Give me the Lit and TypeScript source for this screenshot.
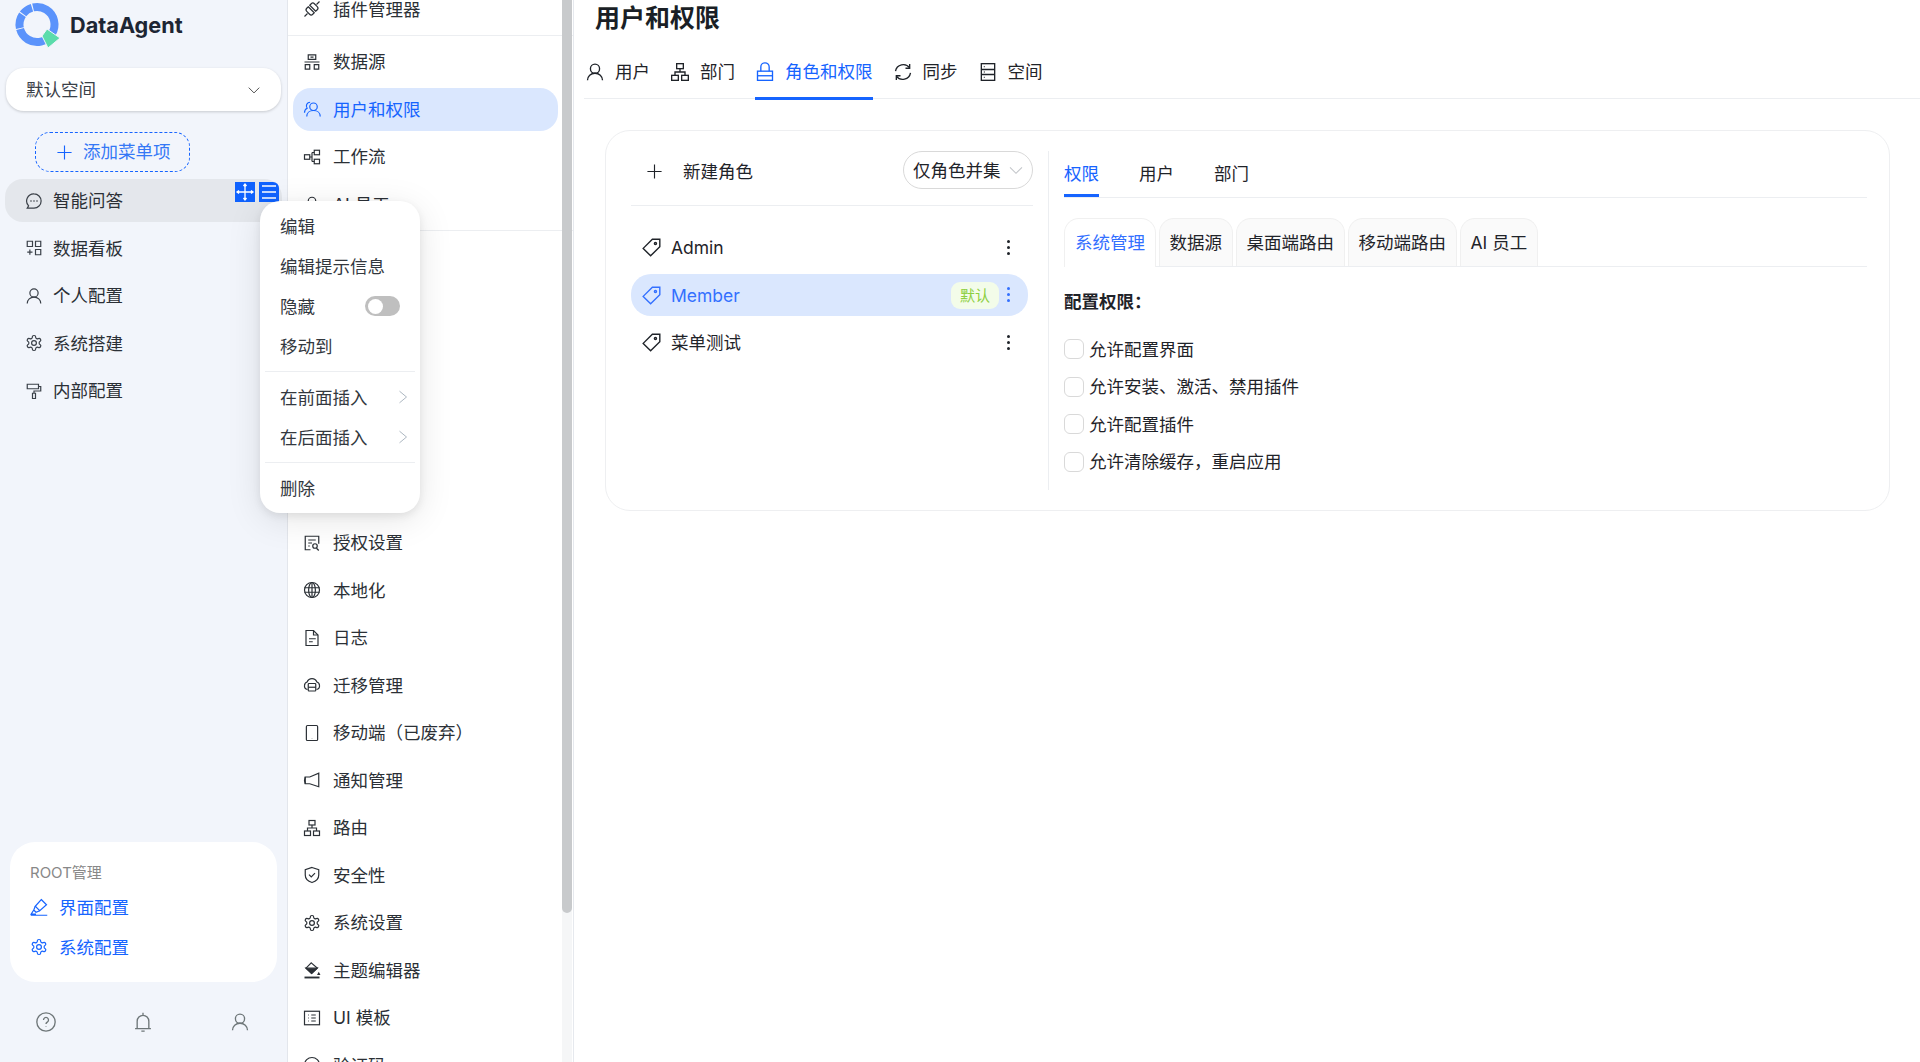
import { LitElement, html, css, svg } from "lit";
import { customElement } from "lit/decorators.js";

// stroke icons on a 24 grid
const gearPath = svg`<path d="M12.22 2h-.44a2 2 0 0 0-2 2v.18a2 2 0 0 1-1 1.73l-.43.25a2 2 0 0 1-2 0l-.15-.08a2 2 0 0 0-2.73.73l-.22.38a2 2 0 0 0 .73 2.73l.15.1a2 2 0 0 1 1 1.72v.51a2 2 0 0 1-1 1.74l-.15.09a2 2 0 0 0-.73 2.73l.22.38a2 2 0 0 0 2.73.73l.15-.08a2 2 0 0 1 2 0l.43.25a2 2 0 0 1 1 1.73V20a2 2 0 0 0 2 2h.44a2 2 0 0 0 2-2v-.18a2 2 0 0 1 1-1.73l.43-.25a2 2 0 0 1 2 0l.15.08a2 2 0 0 0 2.73-.73l.22-.39a2 2 0 0 0-.73-2.73l-.15-.08a2 2 0 0 1-1-1.74v-.5a2 2 0 0 1 1-1.74l.15-.09a2 2 0 0 0 .73-2.73l-.22-.38a2 2 0 0 0-2.73-.73l-.15.08a2 2 0 0 1-2 0l-.43-.25a2 2 0 0 1-1-1.73V4a2 2 0 0 0-2-2z"/><circle cx="12" cy="12" r="3.2"/>`;

const icons: Record<string, unknown> = {
  plug: svg`<path d="M22 2l-4 4M2 22l4-4"/><path d="M7 9l8 8-2 2a3 3 0 0 1-4.2 0l-3.800-3.800a3 3 0 0 1 0-4.200z"/><path d="M17 15l-8-8 2-2a3 3 0 0 1 4.200 0l3.800 3.800a3 3 0 0 1 0 4.200z"/>`,
  datasource: svg`<path d="M7 2.500h10v6H7zM3 15.500h6v6H3zM15 15.500h6v6h-6z"/><path d="M2 12h20M10 5.500h4" />`,
  team: svg`<circle cx="14" cy="9" r="5"/><path d="M5 22c0-5 4-8 9-8s9 3 9 8"/><path d="M9.500 3a5 5 0 0 0-4 8c-2 1-3.500 3-3.500 6"/>`,
  flow: svg`<rect x="2" y="9" width="7" height="6"/><rect x="15" y="3" width="7" height="6"/><rect x="15" y="15" width="7" height="6"/><path d="M9 12h3M12 6v12M12 6h3M12 18h3"/>`,
  robot: svg`<circle cx="12" cy="8" r="5"/><path d="M4 21c0-4 4-7 8-7s8 3 8 7"/>`,
  license: svg`<path d="M10 21H3V3h18v10"/><path d="M7 8h10M7 12h5M7 16h2"/><circle cx="16" cy="16" r="3"/><path d="M18 19l3 3"/>`,
  globe: svg`<circle cx="12" cy="12" r="10"/><ellipse cx="12" cy="12" rx="4.500" ry="10"/><path d="M2 9h20M2 15h20M12 2v20"/>`,
  file: svg`<path d="M14 2H4v20h16V8z"/><path d="M14 2v6h6M8 13h9M8 17h5"/>`,
  cloud: svg`<path d="M6 18a5 5 0 0 1-4-5.500 5 5 0 0 1 3.500-4.500 7 7 0 0 1 13 0 5 5 0 0 1 3.500 4.500 5 5 0 0 1-4 5.500"/><rect x="7" y="10" width="10" height="10" rx="1"/><path d="M7 15h10"/>`,
  mobile: svg`<rect x="4.500" y="2" width="15" height="20" rx="1.500"/><path d="M12 18.500v.5"/>`,
  horn: svg`<path d="M21 3v18L9 17H3V8h6z"/><path d="M3 8l-1 4.500L3 17"/>`,
  tree: svg`<rect x="8" y="2" width="8" height="6"/><rect x="2" y="16" width="8" height="6"/><rect x="14" y="16" width="8" height="6"/><path d="M12 8v4M6 16v-4h12v4"/>`,
  shield: svg`<path d="M12 2l9 3v7c0 5-4 8.500-9 10-5-1.500-9-5-9-10V5z"/><path d="M8 11.500l3 3 5-5"/>`,
  gear: gearPath,
  bucket: svg`<path d="M11 2.500l8 7-7.500 7-7.500-7z"/><path d="M4 9.500h15l-7.500 7z" fill="currentColor"/><path d="M2 22h20" stroke-width="2.500"/><path d="M21 16l1 2h-2z" fill="currentColor"/>`,
  list: svg`<rect x="2" y="3" width="20" height="18"/><path d="M7 8h1M7 12h1M7 16h1M11 8h6M11 12h6M11 16h6"/>`,
  captcha: svg`<circle cx="12" cy="12" r="10"/>`,
  chat: svg`<path d="M12 2.500a9.500 9.500 0 0 1 0 19H3l1.800-3A9.500 9.500 0 0 1 12 2.500z"/><g fill="currentColor" stroke="none"><circle cx="8" cy="12" r="1.100"/><circle cx="12" cy="12" r="1.100"/><circle cx="16" cy="12" r="1.100"/></g>`,
  board: svg`<path d="M3 3h7v7H3zM14 3h7v7h-7zM14 14h7v7h-7zM6.500 14v7M3 17.500h7"/>`,
  user: svg`<circle cx="12" cy="8" r="5.500"/><path d="M3 22c0-5 4-8.500 9-8.500s9 3.500 9 8.500"/>`,
  roller: svg`<path d="M3 3h15v6H3zM18 6h3v6h-9v3M10 15h4v7h-4z"/>`,
  lock: svg`<rect x="3" y="11" width="18" height="11"/><path d="M7 11V6a5 5 0 0 1 10 0v5"/><path d="M3 16.500h18"/>`,
  sync: svg`<path d="M20 7a9.500 9.500 0 0 0-17 4"/><path d="M4 17a9.500 9.500 0 0 0 17-4"/><path d="M20 2.500V7.500h-5M4 21.500V16.500h5"/>`,
  space: svg`<rect x="4" y="2" width="16" height="20"/><path d="M4 9h16M4 15h16M7 5.500h1M7 12h1M7 18.500h1"/>`,
  tag: svg`<path d="M13 2.500h8.500V11L11 21.500 2.500 13z"/><circle cx="16.500" cy="7.500" r="1.200"/>`,
  help: svg`<circle cx="12" cy="12" r="11"/><path d="M9 9.500a3 3 0 1 1 4.500 2.600c-1 .6-1.500 1.200-1.500 2.400M12 17.500v.5"/>`,
  bell: svg`<path d="M12 1v2.500M5 20V11a7 7 0 0 1 14 0v9M2.500 20h19M10 23h4"/>`,
  highlight: svg`<path d="M15 2l7 7-9 8-6-6z"/><path d="M7 11l-2 5 3 3 5-2M1 23h22M5 16l-3.500 5.500H8"/>`,
  plus: svg`<path d="M12 2v20M2 12h20"/>`,
  chevron: svg`<path d="M3 8l9 9 9-9"/>`,
  right: svg`<path d="M6 2l12 10L6 22"/>`,
};

const icon = (name: string, size = 20) =>
  html`<svg class="ic" width=${size} height=${size} viewBox="0 0 24 24" fill="none" stroke="currentColor" stroke-width="1.600">${icons[name]}</svg>`;

const topPanel = [
  { i: "plug", t: "插件管理器" },
  { i: "datasource", t: "数据源", sep: true },
  { i: "team", t: "用户和权限", on: true },
  { i: "flow", t: "工作流" },
  { i: "robot", t: "AI 员工" },
];

const bottomPanel = [
  { i: "license", t: "授权设置" },
  { i: "globe", t: "本地化" },
  { i: "file", t: "日志" },
  { i: "cloud", t: "迁移管理" },
  { i: "mobile", t: "移动端（已废弃）" },
  { i: "horn", t: "通知管理" },
  { i: "tree", t: "路由" },
  { i: "shield", t: "安全性" },
  { i: "gear", t: "系统设置" },
  { i: "bucket", t: "主题编辑器" },
  { i: "list", t: "UI 模板" },
  { i: "captcha", t: "验证码" },
];

const sideNav = [
  { i: "chat", t: "智能问答", on: true },
  { i: "board", t: "数据看板" },
  { i: "user", t: "个人配置" },
  { i: "gear", t: "系统搭建" },
  { i: "roller", t: "内部配置" },
];

const pageTabs = [
  { i: "user", t: "用户" },
  { i: "tree", t: "部门" },
  { i: "lock", t: "角色和权限", on: true },
  { i: "sync", t: "同步" },
  { i: "space", t: "空间" },
];

const perms = ["允许配置界面", "允许安装、激活、禁用插件", "允许配置插件", "允许清除缓存，重启应用"];

@customElement("app-root")
export class AppRoot extends LitElement {
  static styles = css`
    :host {
      display: flex;
      height: 100vh;
      overflow: hidden;
      position: relative;
      background: #fff;
      color: #1f2329;
      font: 17.5px/25px Inter, "Noto Sans CJK SC", sans-serif;
    }
    .ic {
      flex: none;
    }

    /* left sidebar */
    .side {
      width: 288px;
      flex: none;
      box-sizing: border-box;
      border-right: 1px solid #e3e6ec;
      background: #f2f5fb;
      display: flex;
      flex-direction: column;
      padding: 0 6px;
    }
    .logo {
      display: flex;
      align-items: center;
      gap: 7px;
      height: 50px;
      padding-left: 7px;
      font-size: 21.7px;
      font-weight: 700;
      color: #1d2533;
    }
    .space {
      margin-top: 18px;
      height: 43px;
      width: 275px;
      box-sizing: border-box;
      padding: 0 20px 0 20px;
      display: flex;
      align-items: center;
      justify-content: space-between;
      background: #fff;
      border-radius: 18px;
      box-shadow: 0 1px 3px rgba(0, 0, 0, 0.18);
      color: #3a4048;
    }
    .space .ic {
      color: #444;
    }
    .add {
      margin: 21px 0 7px 29px;
      width: 155px;
      height: 40px;
      box-sizing: border-box;
      border: 1px dashed #1664ff;
      border-radius: 15px;
      display: flex;
      align-items: center;
      gap: 10px;
      padding: 0 0 2px 20px;
      color: #3478f6;
    }
    .add .ic {
      color: #1664ff;
      margin-top: 2px;
    }
    .nav {
      height: 43px;
      margin: 0 -1px 4.500px;
      width: 277px;
      box-sizing: border-box;
      padding-left: 19.500px;
      display: flex;
      align-items: center;
      gap: 10.500px;
      border-radius: 18px;
      color: #2b3036;
    }
    .nav.on {
      background: #e4e7ec;
    }
    .nav .ic {
      color: #3a4048;
    }
    .root {
      margin: auto 0 0 4px;
      width: 267px;
      height: 140px;
      box-sizing: border-box;
      background: #fff;
      border-radius: 25px;
      padding: 19px 20px;
    }
    .root h4 {
      margin: 0 0 2px;
      font-size: 15px;
      line-height: 24px;
      font-weight: 400;
      color: #888;
    }
    .root div {
      display: flex;
      align-items: center;
      gap: 11px;
      height: 40px;
      color: #1664ff;
    }
    .foot {
      height: 80px;
      margin: 0 -6px;
      width: 288px;
      box-sizing: border-box;
      padding: 0 38px 0 36px;
      display: flex;
      align-items: center;
      justify-content: space-between;
      color: #6e7678;
    }

    /* settings list */
    .panel {
      width: 286px;
      flex: none;
      position: relative;
      overflow: hidden;
      box-sizing: border-box;
      border-right: 1px solid #e6e9ee;
      padding: 0 16px 0 4px;
    }
    .list {
      margin-top: -12.500px;
    }
    .row {
      height: 43px;
      margin: 0 -1px 4.500px 1px;
      display: flex;
      align-items: center;
      gap: 12px;
      padding-left: 10px;
      border-radius: 18px;
      color: #2b3036;
    }
    .row.on {
      background: #dae7fe;
      color: #1664ff;
    }
    .sep {
      height: 1px;
      background: #eceef1;
      margin: 0 -16px 0 -4px;
    }
    .sep.top {
      margin-bottom: 4px;
    }
    .hidden-rows {
      height: 290px;
    }
    .track {
      position: absolute;
      top: 0;
      right: 1px;
      bottom: 0;
      width: 10px;
      background: #f5f6f7;
    }
    .thumb {
      height: 913px;
      background: #c8cacc;
      border-radius: 0 0 5px 5px;
    }

    /* main */
    .main {
      flex: 1;
      min-width: 0;
      padding-left: 10px;
    }
    h1 {
      margin: 0;
      height: 36px;
      padding-left: 11px;
      font-size: 25px;
      line-height: 36px;
      font-weight: 700;
      color: #1a1f26;
    }
    .tabs {
      margin-top: 22px;
      height: 40px;
      padding-left: 1px;
      display: flex;
      gap: 20px;
      border-bottom: 1px solid #eceef1;
    }
    .tab {
      height: 42px;
      padding-top: 1px;
      box-sizing: border-box;
      display: flex;
      gap: 10px;
      align-items: flex-start;
    }
    .tab .ic {
      margin-top: 2.500px;
    }
    .tab.on {
      color: #1664ff;
      border-bottom: 3px solid #1664ff;
    }
    .card {
      margin: 31px 30px 0 21px;
      height: 381px;
      box-sizing: border-box;
      border: 1px solid #eeeff1;
      border-radius: 25px;
      display: flex;
      padding: 20px 0 20px 25px;
    }
    .roles {
      width: 402px;
      flex: none;
      margin-right: 15px;
    }
    .roles-head {
      height: 54px;
      box-sizing: content-box;
      border-bottom: 1px solid #eceef1;
      display: flex;
      align-items: flex-start;
      gap: 22px;
      padding: 0 0 0 15px;
      margin-bottom: 20.500px;
    }
    .roles-head > .ic {
      margin-top: 12px;
    }
    .roles-head > span {
      margin: 8px 0 0 -2px;
    }
    .mode {
      margin-left: auto;
      height: 38px;
      width: 130px;
      box-sizing: border-box;
      border: 1px solid #d9d9d9;
      border-radius: 19px;
      display: flex;
      align-items: center;
      gap: 7px;
      padding-left: 9px;
    }
    .mode .ic {
      color: #c3c6ca;
    }
    .role {
      width: 397px;
      height: 42px;
      margin-bottom: 5.500px;
      box-sizing: border-box;
      display: flex;
      align-items: center;
      gap: 9px;
      padding: 0 18px 0 10px;
      border-radius: 20px;
    }
    .role.on {
      background: #dae7fe;
      color: #3370ff;
    }
    .role .dots {
      margin-left: auto;
      display: flex;
      flex-direction: column;
      gap: 3px;
    }
    .dots i {
      width: 3px;
      height: 3px;
      border-radius: 50%;
      background: currentColor;
    }
    .chip {
      margin-left: auto;
      margin-right: -1px;
      width: 48px;
      height: 27px;
      background: #f3fce9;
      color: #8ccf3f;
      border-radius: 9px;
      font-size: 15px;
      display: flex;
      align-items: center;
      justify-content: center;
    }
    .role .chip + .dots {
      margin-left: 0;
      margin-top: -2px;
    }
    .perms {
      flex: 1;
      border-left: 1px solid #eceef1;
      padding-left: 15px;
      margin-right: 22px;
    }
    .sub {
      height: 47px;
      display: flex;
      gap: 40px;
      border-bottom: 1px solid #eceef1;
      box-sizing: border-box;
      padding-top: 10px;
    }
    .sub span {
      height: 36px;
      box-sizing: border-box;
    }
    .sub .on {
      color: #1664ff;
      border-bottom: 3px solid #1664ff;
    }
    .cards {
      margin-top: 20px;
      height: 49px;
      box-sizing: border-box;
      display: flex;
      gap: 2.500px;
      border-bottom: 1px solid #eceef1;
    }
    .cards span {
      box-sizing: border-box;
      height: 48px;
      padding: 11px 10px 0;
      background: #fafafa;
      border: 1px solid #f0f0f0;
      border-bottom: 0;
      border-radius: 15px 15px 0 0;
    }
    .cards .on {
      background: #fff;
      color: #3370ff;
      height: 49px;
      position: relative;
    }
    h5 {
      margin: 22px 0 16.500px;
      font-size: 17.5px;
      line-height: 25px;
      font-weight: 700;
    }
    .check {
      display: flex;
      align-items: center;
      gap: 5px;
      height: 37.500px;
    }
    .check i {
      width: 20px;
      height: 20px;
      box-sizing: border-box;
      border: 1px solid #d9d9d9;
      border-radius: 6px;
    }

    /* context menu over the sidebar */
    .menu {
      position: absolute;
      left: 260px;
      top: 201px;
      width: 160px;
      height: 312px;
      box-sizing: border-box;
      padding: 5px;
      background: #fff;
      border-radius: 20px;
      box-shadow: 0 7px 35px rgba(0, 0, 0, 0.1), 0 3px 8px rgba(0, 0, 0, 0.08);
      color: #33383e;
    }
    .menu div {
      height: 40px;
      padding: 0 0 0 15px;
      display: flex;
      align-items: center;
      justify-content: space-between;
    }
    .menu hr {
      border: 0;
      height: 1px;
      margin: 5px 0;
      background: #eceef1;
    }
    .menu .ic {
      color: #a7b2bc;
      margin-right: 5.500px;
    }
    .switch {
      width: 35px;
      height: 20px;
      margin-right: 15px;
      box-sizing: border-box;
      padding: 2.500px;
      background: #bfbfbf;
      border-radius: 10px;
    }
    .switch i {
      display: block;
      width: 15px;
      height: 15px;
      border-radius: 50%;
      background: #fff;
    }
    .handle {
      position: absolute;
      top: 182px;
      width: 20px;
      height: 20px;
      background: #0f62fe;
      color: #fff;
    }
    .handle.move {
      left: 235px;
    }
    .handle.bars {
      left: 259px;
      border-radius: 0 6px 0 0;
    }
  `;

  render() {
    return html`
      <aside class="side">
        <div class="logo">
          <svg width="50" height="48" viewBox="0 0 50 48" fill="none">
            <circle
              cx="24"
              cy="23.500"
              r="17.500"
              stroke="#5b93fb"
              stroke-width="8"
              pathLength="360"
              stroke-dasharray="268 3 46 3 36 4"
              transform="rotate(-103 24 23.500)"
            />
            <path d="M34 28L47 37 35 47 29 35z" fill="#5bdcab" stroke="#f2f5fb" stroke-width="1" stroke-linejoin="round" />
          </svg>
          DataAgent
        </div>
        <div class="space">默认空间 ${icon("chevron", 14)}</div>
        <div class="add">${icon("plus", 17)} 添加菜单项</div>
        ${sideNav.map((n) => html`<div class="nav ${n.on ? "on" : ""}">${icon(n.i, 18)}${n.t}</div>`)}
        <div class="root">
          <h4>ROOT管理</h4>
          <div>${icon("highlight", 18)}界面配置</div>
          <div>${icon("gear", 18)}系统配置</div>
        </div>
        <div class="foot">${icon("help", 20)}${icon("bell", 20)}${icon("user", 20)}</div>
      </aside>

      <section class="panel">
        <div class="list">
          ${topPanel.map(
            (r) => html`${r.sep ? html`<div class="sep top"></div>` : ""}
              <div class="row ${r.on ? "on" : ""}">${icon(r.i, 18)}${r.t}</div>`,
          )}
          <div class="sep"></div>
          <div class="hidden-rows"></div>
          ${bottomPanel.map((r) => html`<div class="row">${icon(r.i, 18)}${r.t}</div>`)}
        </div>
        <div class="track"><div class="thumb"></div></div>
      </section>

      <main class="main">
        <h1>用户和权限</h1>
        <nav class="tabs">
          ${pageTabs.map((t) => html`<div class="tab ${t.on ? "on" : ""}">${icon(t.i, 20)}<span>${t.t}</span></div>`)}
        </nav>
        <div class="card">
          <div class="roles">
            <div class="roles-head">
              ${icon("plus", 17)}<span>新建角色</span>
              <div class="mode">仅角色并集 ${icon("chevron", 16)}</div>
            </div>
            <div class="role">${icon("tag", 21)}Admin<span class="dots"><i></i><i></i><i></i></span></div>
            <div class="role on">
              ${icon("tag", 21)}Member<span class="chip">默认</span><span class="dots"><i></i><i></i><i></i></span>
            </div>
            <div class="role">${icon("tag", 21)}菜单测试<span class="dots"><i></i><i></i><i></i></span></div>
          </div>
          <div class="perms">
            <div class="sub"><span class="on">权限</span><span>用户</span><span>部门</span></div>
            <div class="cards">
              <span class="on">系统管理</span><span>数据源</span><span>桌面端路由</span><span>移动端路由</span><span>AI 员工</span>
            </div>
            <h5>配置权限：</h5>
            ${perms.map((p) => html`<div class="check"><i></i>${p}</div>`)}
          </div>
        </div>
      </main>

      <div class="handle move">
        <svg width="20" height="20" viewBox="0 0 20 20" fill="none" stroke="currentColor" stroke-width="1.300">
          <path d="M10 2v16M2 10h16M8.500 4L10 2l1.500 2M8.500 16l1.500 2 1.500-2M4 8.500L2 10l2 1.500M16 8.500l2 1.500-2 1.500" />
        </svg>
      </div>
      <div class="handle bars">
        <svg width="20" height="20" viewBox="0 0 20 20" fill="none" stroke="currentColor" stroke-width="1.500">
          <path d="M3 4h14M3 10h14M3 16h14" />
        </svg>
      </div>
      <div class="menu">
        <div>编辑</div>
        <div>编辑提示信息</div>
        <div>隐藏<span class="switch"><i></i></span></div>
        <div>移动到</div>
        <hr />
        <div>在前面插入 ${icon("right", 14)}</div>
        <div>在后面插入 ${icon("right", 14)}</div>
        <hr />
        <div>删除</div>
      </div>
    `;
  }
}
